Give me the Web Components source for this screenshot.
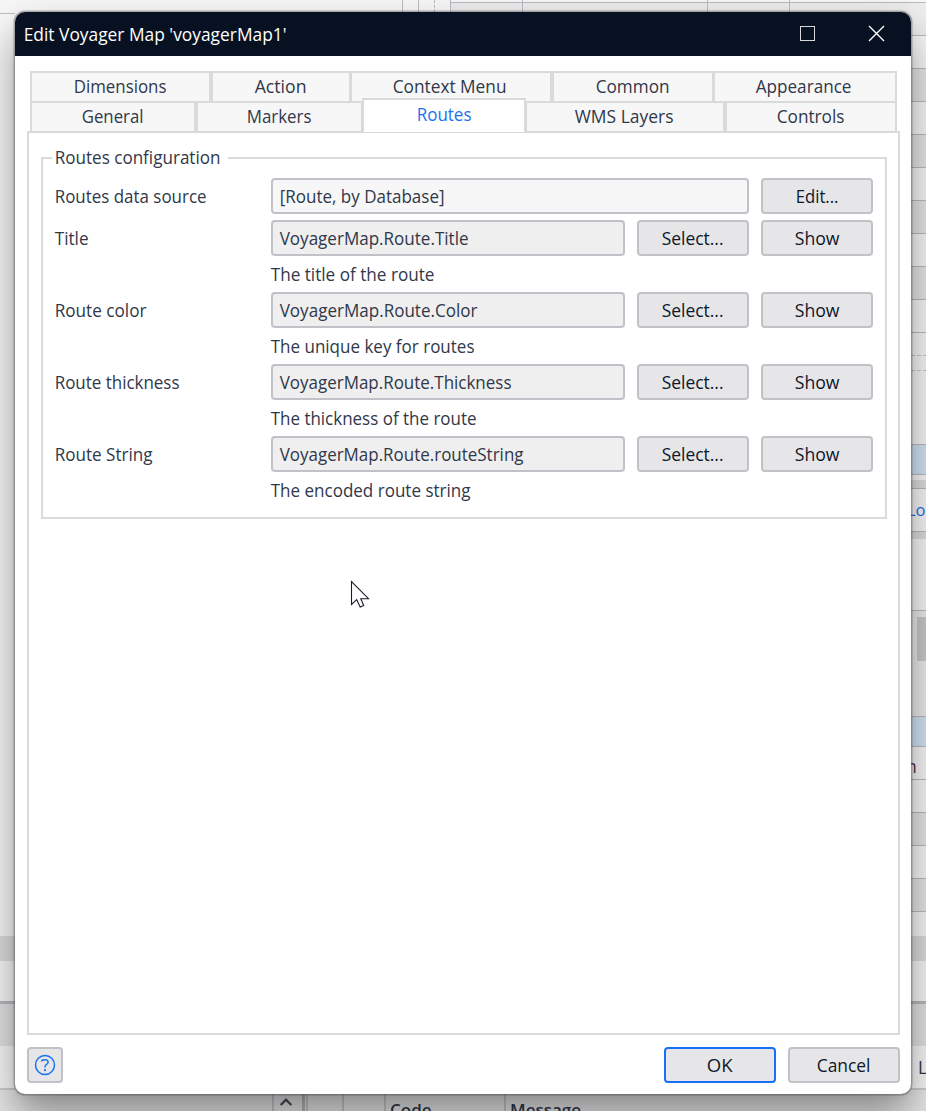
<!DOCTYPE html>
<html lang="en">
<head>
<meta charset="utf-8">
<title>Edit Voyager Map</title>
<style>
html,body{margin:0;height:1111px;width:926px;overflow:hidden}
body{display:grid;grid-template:1111px / 926px;font:17.5px/24px "Open Sans","Noto Sans",sans-serif;color:#30384a;background:#f4f4f4}
desktop-backdrop,dialog-window{grid-area:1/1}
</style>
</head>
<body>
<desktop-backdrop></desktop-backdrop>
<dialog-window>
  <ui-text slot="title" w="263">Edit Voyager Map 'voyagerMap1'</ui-text>
  <tab-row slot="tabs">
    <tab-item style="width:181px"><ui-text w="93">Dimensions</ui-text></tab-item>
    <tab-item style="width:140px"><ui-text w="52">Action</ui-text></tab-item>
    <tab-item thin style="width:201px"><ui-text w="114">Context Menu</ui-text></tab-item>
    <tab-item style="width:162px"><ui-text w="74">Common</ui-text></tab-item>
    <tab-item thin style="width:183px"><ui-text w="96">Appearance</ui-text></tab-item>
  </tab-row>
  <tab-row slot="tabs">
    <tab-item style="width:166px"><ui-text w="62">General</ui-text></tab-item>
    <tab-item style="width:167px"><ui-text w="65">Markers</ui-text></tab-item>
    <tab-item style="width:164px" selected><ui-text w="55">Routes</ui-text></tab-item>
    <tab-item thin style="width:199px"><ui-text w="99">WMS Layers</ui-text></tab-item>
    <tab-item style="width:172px"><ui-text w="68">Controls</ui-text></tab-item>
  </tab-row>
  <group-box>
    <ui-text slot="legend" w="166">Routes configuration</ui-text>
    <form-row>
      <ui-text slot="label" w="152">Routes data source</ui-text>
      <text-field plain><ui-text w="165">[Route, by Database]</ui-text></text-field>
      <push-button><ui-text w="43">Edit...</ui-text></push-button>
    </form-row>
    <form-row>
      <ui-text slot="label" w="34">Title</ui-text>
      <text-field><ui-text w="189">VoyagerMap.Route.Title</ui-text></text-field>
      <push-button><ui-text w="62">Select...</ui-text></push-button>
      <push-button><ui-text w="45">Show</ui-text></push-button>
      <ui-text slot="hint" w="164">The title of the route</ui-text>
    </form-row>
    <form-row>
      <ui-text slot="label" w="92">Route color</ui-text>
      <text-field><ui-text w="198">VoyagerMap.Route.Color</ui-text></text-field>
      <push-button><ui-text w="62">Select...</ui-text></push-button>
      <push-button><ui-text w="45">Show</ui-text></push-button>
      <ui-text slot="hint" w="204">The unique key for routes</ui-text>
    </form-row>
    <form-row>
      <ui-text slot="label" w="125">Route thickness</ui-text>
      <text-field><ui-text w="232">VoyagerMap.Route.Thickness</ui-text></text-field>
      <push-button><ui-text w="62">Select...</ui-text></push-button>
      <push-button><ui-text w="45">Show</ui-text></push-button>
      <ui-text slot="hint" w="206">The thickness of the route</ui-text>
    </form-row>
    <form-row>
      <ui-text slot="label" w="98">Route String</ui-text>
      <text-field><ui-text w="244">VoyagerMap.Route.routeString</ui-text></text-field>
      <push-button><ui-text w="62">Select...</ui-text></push-button>
      <push-button><ui-text w="45">Show</ui-text></push-button>
      <ui-text slot="hint" w="200">The encoded route string</ui-text>
    </form-row>
  </group-box>
  <mouse-pointer></mouse-pointer>
  <push-button slot="help" square><help-icon></help-icon></push-button>
  <push-button slot="actions" primary><ui-text w="26">OK</ui-text></push-button>
  <push-button slot="actions"><ui-text w="54">Cancel</ui-text></push-button>
</dialog-window>
<script>
function define(name, html, ready) {
  const t = document.createElement('template');
  t.innerHTML = html;
  customElements.define(name, class extends HTMLElement {
    constructor() {
      super();
      this.attachShadow({ mode: 'open' }).append(t.content.cloneNode(true));
    }
    connectedCallback() { if (ready) ready(this); }
  });
}

/* A single line of text, condensed so that it takes the width in its "w" attribute. */
define('ui-text', `<style>:host{display:block;white-space:nowrap;flex:none}span{display:inline-block;transform-origin:0 50%}</style><span><slot></slot></span>`, el => {
  const w = +el.getAttribute('w'), s = el.shadowRoot.querySelector('span');
  if (!w) return;
  const now = s.getBoundingClientRect().width;
  el.style.width = w + 'px';
  if (now) s.style.transform = `translate(-.3px,-1px) scaleX(${((w - .2) / now).toFixed(4)})`;
});

define('tab-row', `<style>:host{display:flex;height:30px;align-items:flex-end;padding-left:3px}</style><slot></slot>`);

define('tab-item', `<style>
:host{display:flex;box-sizing:border-box;height:32px;margin-bottom:-2px;border:2px solid #d9dadc;background:#f7f7f7;justify-content:center;align-items:center;flex:none}
:host([thin]){border-left-width:1px;padding-right:2px}
:host([selected]){height:34px;background:#fff;color:#1a73f0;border-bottom:0;margin:0 0 -1px -1px;position:relative;z-index:1;padding-bottom:2px}
</style><slot></slot>`);

define('push-button', `<style>
:host{display:flex;box-sizing:border-box;width:112px;height:36px;border:2px solid #c1c1c8;border-radius:4px;background:#e6e6e9;color:#0f172a;align-items:center;justify-content:center;flex:none;padding-top:1px}
:host([primary]){border-color:#1670f8}
:host([square]){width:36px;padding:0}
</style><slot></slot>`);

define('help-icon', `<style>:host{display:flex;position:relative;left:-.5px;top:-.5px}</style>
<svg width="22" height="22" viewBox="0 0 22 22" fill="none" stroke="#1a73f0" stroke-width="1.5"><circle cx="11" cy="11" r="9.5"/><path d="M7.9 7.6V6.5Q9 5.8 11 5.8Q14.1 5.8 14.1 8Q14.1 9.5 12.5 10.3Q11 11.1 11 13.4"/><circle cx="11" cy="16.2" r="1.1" fill="#1a73f0" stroke="none"/></svg>`);

define('text-field', `<style>
:host{display:flex;box-sizing:border-box;flex:1;height:36px;border:2px solid #c1c1c8;border-radius:4px;background:#efefef;align-items:center;padding:1px 7px 0}
:host([plain]){background:#f7f7f7}
</style><slot></slot>`);

define('form-row', `<style>
:host{display:grid;grid-template-columns:216px 602px}
.label{height:36px;display:flex;align-items:center;padding-top:1px;box-sizing:border-box}
.controls{display:flex;gap:12px}
.hint{grid-column:2;display:flex;align-items:center;padding-top:1px;box-sizing:border-box}
.hint.filled{height:36px}.hint.empty{height:6px}
</style><div class="label"><slot name="label"></slot></div><div class="controls"><slot></slot></div><div class="hint"><slot name="hint"></slot></div>`,
el => el.shadowRoot.querySelector('.hint').classList.add(el.querySelector('[slot=hint]') ? 'filled' : 'empty'));

define('group-box', `<style>
:host{display:block}
fieldset{box-sizing:border-box;width:846px;height:374px;margin:0;padding:0 12px;border:2px solid #d9dadc;min-width:0}
legend{margin-left:-3px;padding:1px 7px 0 3px;height:26px;box-sizing:border-box}
.body{padding-top:7px}
</style><fieldset><legend><slot name="legend"></slot></legend><div class="body"><slot></slot></div></fieldset>`);

define('mouse-pointer', `<style>:host{display:block;margin:61px 0 0 309px}</style>
<svg width="20" height="30" viewBox="0 0 20 30"><path d="M1.5 1.5V24.5L6.7 19.7L10.2 27L13.7 25.5L10.8 18.7H18.5Z" fill="#fff" stroke="#1c1c2a" stroke-width="1.1"/></svg>`);

define('dialog-window', `<style>
:host{display:flex;flex-direction:column;box-sizing:border-box;width:896px;height:1082px;margin:12px 0 0 15px;border-radius:10px;overflow:hidden;background:#fff;z-index:1;box-shadow:0 0 0 1.5px rgba(70,70,75,.38),0 2px 6px rgba(0,0,0,.06),0 22px 40px rgba(0,0,0,.4)}
header{display:flex;align-items:center;height:44px;box-sizing:border-box;background:#081121;color:#fff;padding:2px 26px 0 9px;flex:none}
header svg{margin-top:-3px}
.max{margin-left:auto;margin-right:52px}
.tabs{margin:15px 0 0 12px;flex:none}
.panel{box-sizing:border-box;width:873px;height:904px;margin-left:12px;border:2px solid #d9dadc;padding:12px 0 0 12px;flex:none}
footer{display:flex;gap:12px;padding:12px 11px 0 12px}
.gap{flex:1}
</style>
<header><slot name="title"></slot>
<svg class="max" width="17" height="17" viewBox="0 0 17 17"><rect x="1.5" y="1.5" width="14" height="14" fill="none" stroke="#d8d8dc"/></svg>
<svg width="17" height="17" viewBox="0 0 17 17"><path d="M1 1L16 16M16 1L1 16" stroke="#fff" stroke-width="1.4"/></svg></header>
<div class="tabs"><slot name="tabs"></slot></div>
<div class="panel"><slot></slot></div>
<footer><slot name="help"></slot><div class="gap"></div><slot name="actions"></slot></footer>`);

/* One horizontal band of an edge strip: height, fill, optional label and its style. */
const band = ([h, c, t, s]) => `<div style="height:${h}px;background:${c};${s || ''}">${t || ''}</div>`;
const L = [1, '#b9b9c1'], A = '#f7f7f7', B = '#e6e6e6', W = '#f7f7f7';
const rightBands = [[2,W],L,[32,'#ededed'],L,[32,A],L,[32,B],L,[32,A],L,[32,B],L,[32,A],L,[32,B],L,[32,A],L,[32,B],L,[32,A],L,
  [22,W],[1,'repeating-linear-gradient(90deg,#c4c4c4 0 4px,#f4f4f4 4px 6px)'],[14,W],[1,'repeating-linear-gradient(90deg,#c4c4c4 0 4px,#f4f4f4 4px 6px)'],[73,W],
  L,[29,'#d2e4f4'],L,[5,W],[8,'#dedede'],L,[42,W,'Lo','color:#1a73f0;font-size:16.5px;line-height:42px;text-indent:-4px'],L,[7,'#dedede'],[71,W],L,
  [6,'#ebebeb'],[44,'linear-gradient(90deg,#ebebeb 6px,#c9c9cb 6px)'],[55,'#ebebeb'],L,[29,'#d2e4f4'],L,[32,W,'n','color:#4a2a4a;line-height:38px;text-indent:-5px'],
  L,[32,A],L,[32,B],L,[32,A],L,[32,B],L,[24,A],[25,'#dcdcdc'],[40,W],[3,'#b7b7bd'],[42,'#e2e2e2'],[42,W,'L','line-height:43px;text-indent:7px;color:#30384a'],[2,'#ccc'],[21,'#e6e6e6']];
const leftBands = [[13,W],[1,'#bdbdc3'],[922,W],[25,'#dcdcdc'],[40,W],[3,'#b7b7bd'],[42,'#e2e2e2'],[42,W],[2,'#ccc'],[21,'#e6e6e6']];
const cell = (w, s, t) => `<div class="cell" style="width:${w}px;${s || ''}">${t || ''}</div>`;
const bottomCells = cell(257) + cell(30, 'border-left:2px solid #c6c6ca', `<svg width="14" height="12" viewBox="0 0 14 12" style="margin:11px 0 0 5px"><path d="M1.7 9L7 3.7L12.3 9" fill="none" stroke="#50505e" stroke-width="2.4"/></svg>`)
  + cell(4, 'border-left:3px solid #b5b5bb') + cell(36, 'border-left:2px solid #c6c6ca') + cell(42, 'border-left:2px solid #c6c6ca')
  + cell(120, 'border-left:2px solid #c6c6ca', '<b style="padding-left:4px">Code</b>') + cell(407, 'border-left:2px solid #c6c6ca', '<b style="padding-left:4px">Message</b>');
const topCells = cell(387, 'background:#f6f6f6') + cell(16, 'border-left:1px solid #b9b9c1;background:#f6f6f6') + cell(16, 'border-left:1px solid #b9b9c1;background:#f6f6f6') + cell(16, 'border-left:1px dashed #b9b9c1;background:#f6f6f6')
  + [72, 185, 82, 122].map(w => cell(w, 'border-left:1px solid #b9b9c1;background:linear-gradient(#f6f6f6 2px,#b9b9c1 2px 3px,#ebebeb 3px)')).join('');
define('desktop-backdrop', `<style>
:host{display:flex;width:926px;height:1111px;overflow:hidden}
.edge{width:15px;flex:none;overflow:hidden}
.edge div{overflow:hidden;white-space:nowrap}
.mid{width:896px;display:flex;flex-direction:column;justify-content:space-between}
.strip{display:flex;height:26px;background:#e6e6e6;overflow:hidden}
.cell{box-sizing:border-box;flex:none;overflow:hidden;height:26px}
b{display:block;font-size:17px;font-weight:600;line-height:22px;margin-top:14px}
</style><div class="edge">${leftBands.map(band).join('')}</div><div class="mid"><div class="strip">${topCells}</div><div class="strip">${bottomCells}</div></div><div class="edge">${rightBands.map(band).join('')}</div>`);
</script>
</body>
</html>
